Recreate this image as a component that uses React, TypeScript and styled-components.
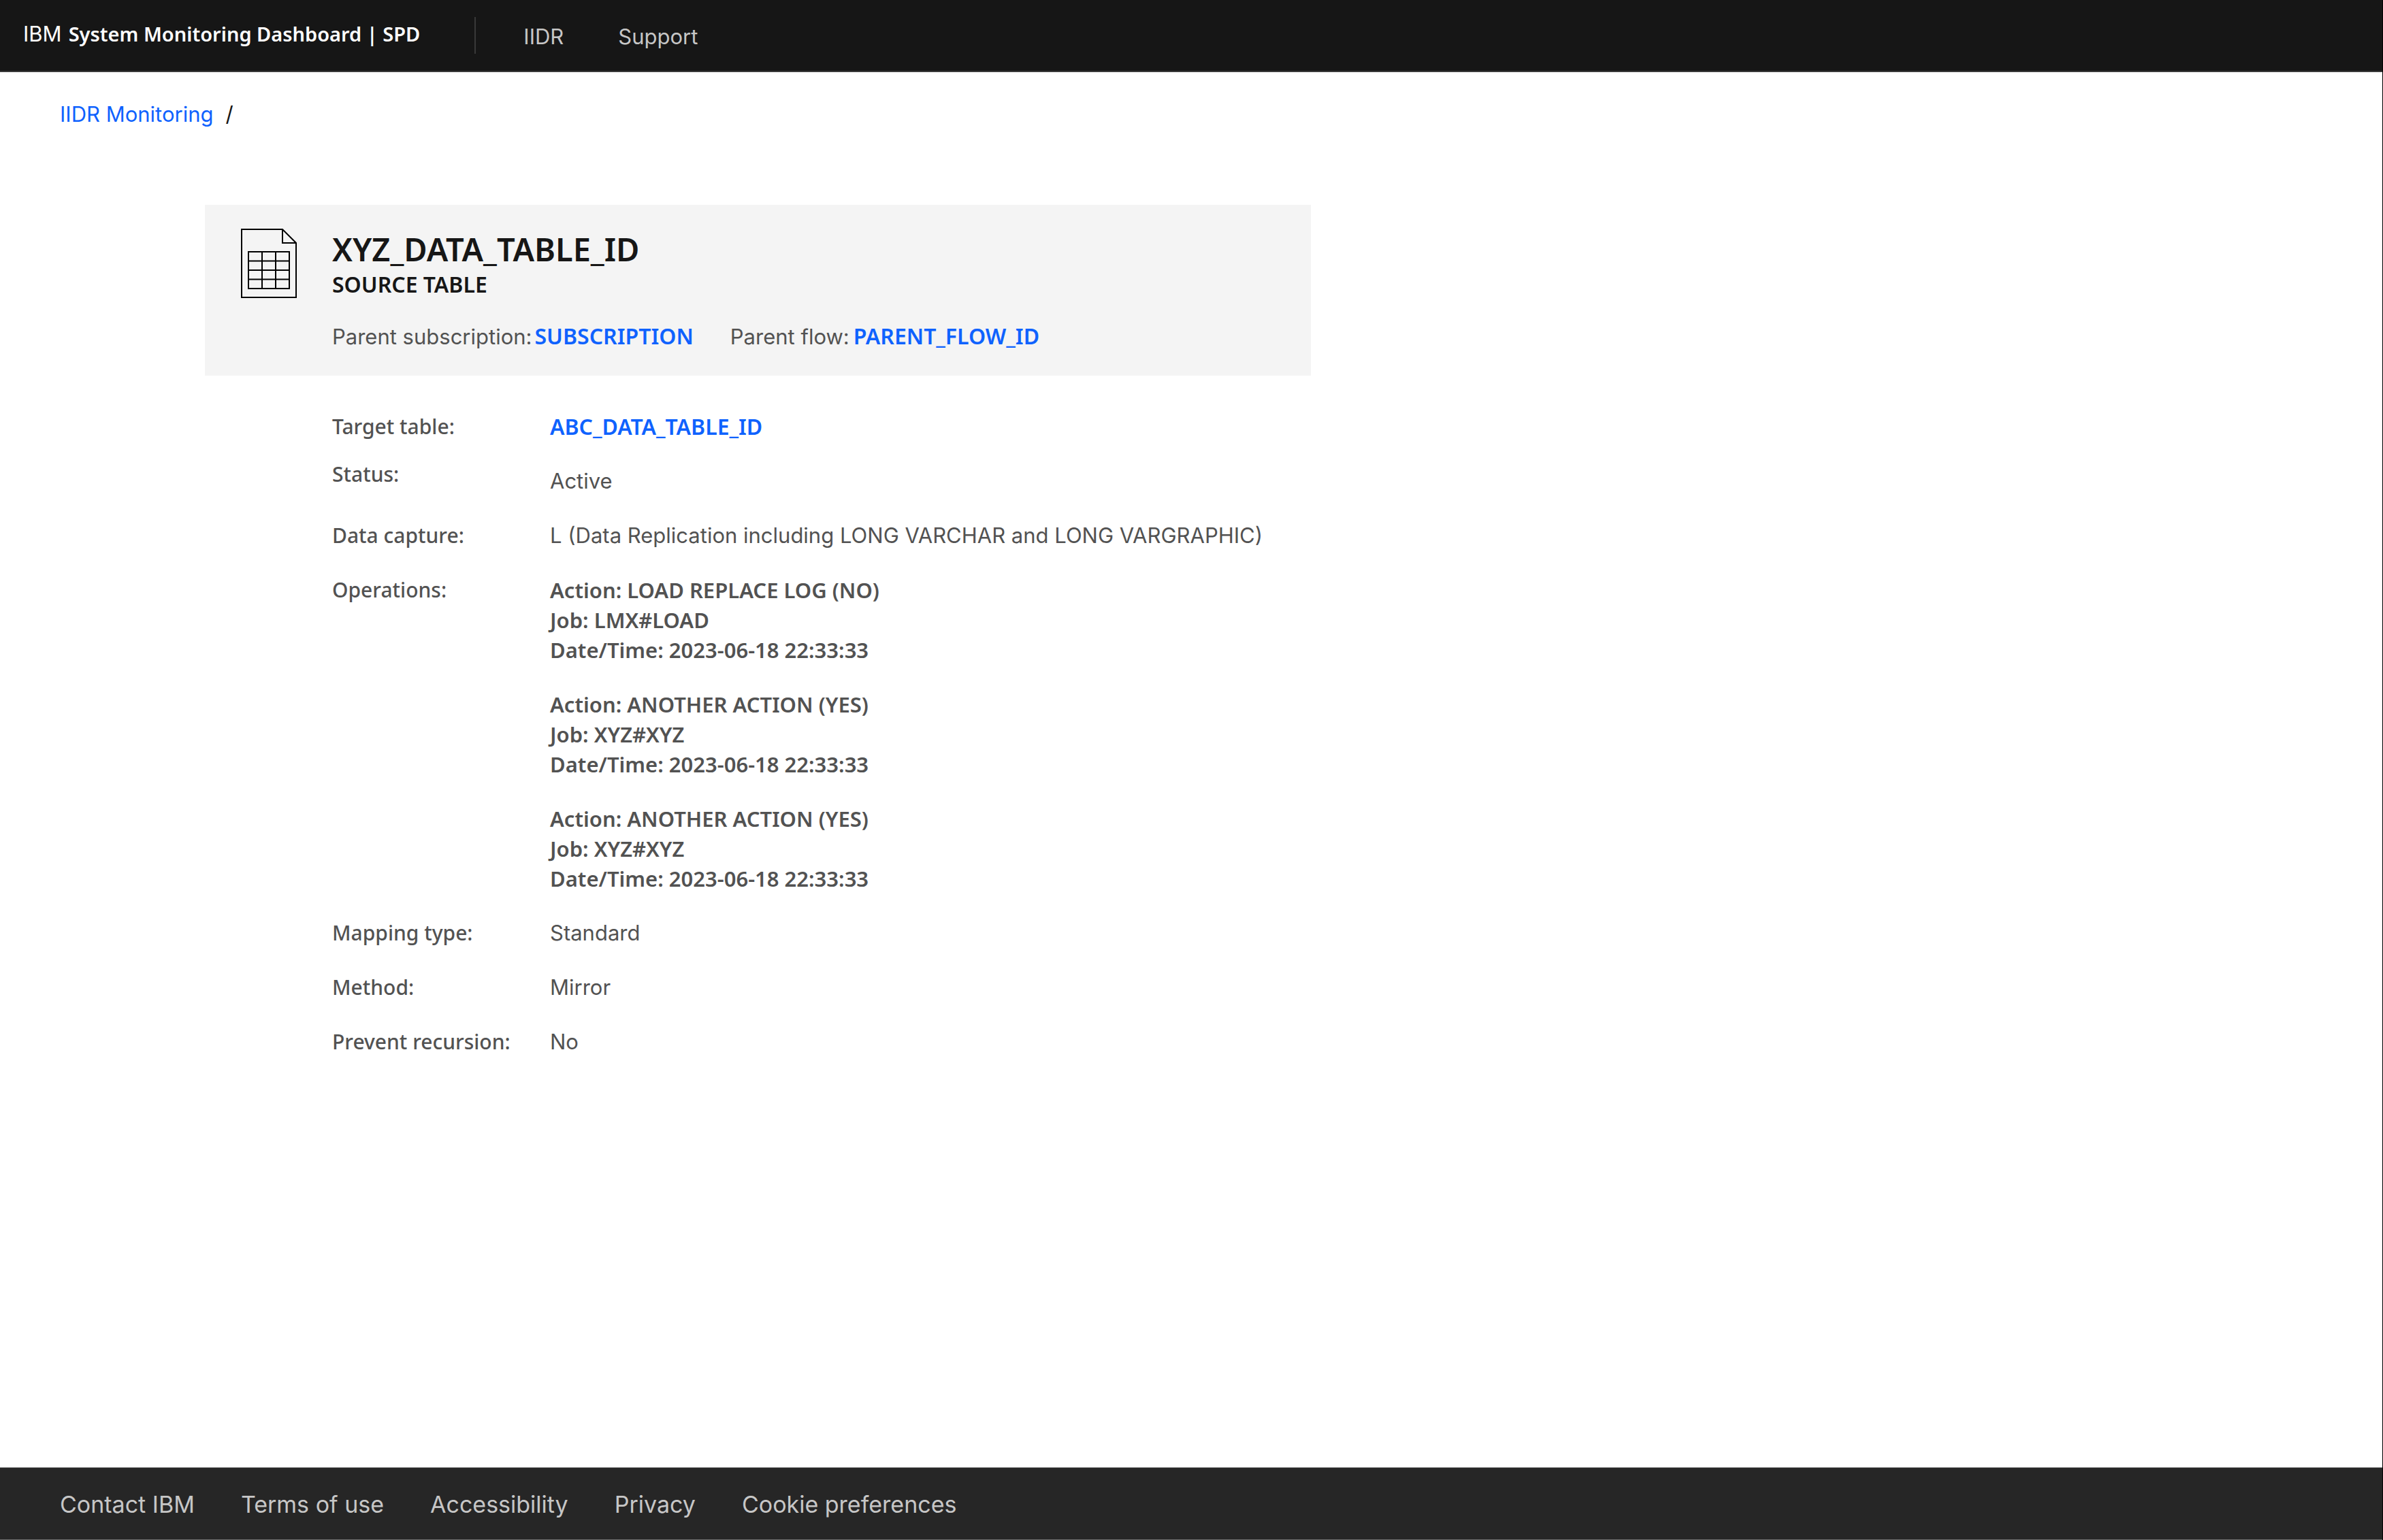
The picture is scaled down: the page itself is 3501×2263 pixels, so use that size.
import React from "react";
import styled, { createGlobalStyle } from "styled-components";

const sans = `Inter, "Liberation Sans", sans-serif`;
const strongSans = `"Noto Sans", "Open Sans", sans-serif`;

const color = {
  ink: "#161616",
  text: "#525252",
  link: "#0f62fe",
  muted: "#c6c6c6",
  line: "#393939",
  layer: "#f4f4f4",
  footer: "#262626",
};

const GlobalStyle = createGlobalStyle`
  * { box-sizing: border-box; }
  body { margin: 0; background: #ffffff; }
  h1, p, dl, dd, ul, ol { margin: 0; padding: 0; list-style: none; }
  a { text-decoration: none; }
`;

const Page = styled.div`
  display: flex;
  flex-direction: column;
  min-height: 100vh;
  border-right: 1px solid #000000;
  font-family: ${sans};
  font-size: 31px;
  line-height: 44px;
  color: ${color.text};
`;

const Header = styled.header`
  display: flex;
  align-items: center;
  height: 106px;
  padding-left: 34px;
  background: ${color.ink};
  border-bottom: 2px solid ${color.line};
  white-space: nowrap;
`;

const Brand = styled.a`
  display: flex;
  align-items: baseline;
  gap: 10px;
  padding: 0 80px 4px 0;
  color: #ffffff;
`;

const BrandName = styled.span`
  font-family: ${strongSans};
  font-size: 29px;
  font-weight: 600;
`;

const HeaderNav = styled.nav`
  display: flex;
  align-items: center;
  gap: 80px;
  height: 54px;
  padding-left: 70px;
  border-left: 2px solid ${color.line};
`;

const HeaderLink = styled.a`
  padding-top: 4px;
  color: ${color.muted};
`;

const Main = styled.main`
  flex: 1;
`;

const Breadcrumb = styled.nav`
  padding: 40px 88px 0;
`;

const Crumbs = styled.ol`
  display: flex;
  gap: 18px;
  color: ${color.ink};
`;

const CrumbLink = styled.a`
  color: ${color.link};
`;

const Content = styled.div`
  max-width: 1926px;
  padding: 111px 0 54px 301px;
`;

const Card = styled.section`
  display: grid;
  grid-template-columns: 134px 1fr;
  padding: 35px 53px;
  background: ${color.layer};
`;

const TableIcon = styled.svg`
  width: 82px;
  height: 102px;
  fill: none;
  stroke: #000000;
  stroke-width: 2;
`;

const Title = styled.h1`
  font-family: ${strongSans};
  font-size: 47px;
  font-weight: 600;
  line-height: 60px;
  color: ${color.ink};
`;

const Subtitle = styled.p`
  font-family: ${strongSans};
  font-size: 32px;
  font-weight: 600;
  color: ${color.ink};
`;

const Parents = styled.ul`
  display: flex;
  gap: 54px;
  padding-top: 32px;
`;

const Parent = styled.li<{ $gap: number }>`
  display: flex;
  align-items: baseline;
  gap: ${(p) => p.$gap}px;
`;

const StrongLink = styled.a`
  font-family: ${strongSans};
  font-size: 32px;
  font-weight: 600;
  color: ${color.link};
`;

const Details = styled.dl`
  display: flex;
  flex-direction: column;
  gap: 36px;
  padding: 53px 0 0 187px;
`;

const Row = styled.div`
  display: grid;
  grid-template-columns: 320px 1fr;
`;

const Label = styled.dt<{ $compact?: boolean }>`
  font-family: ${strongSans};
  font-size: 30px;
  font-weight: 500;
  line-height: ${(p) => (p.$compact ? 24 : 44)}px;
`;

const Value = styled.dd`
  display: flex;
  flex-direction: column;
  gap: 36px;
`;

const Operation = styled.p`
  font-family: ${strongSans};
  font-size: 31px;
  font-weight: 600;
  white-space: pre-line;
`;

const Footer = styled.footer`
  display: flex;
  align-items: center;
  gap: 68px;
  height: 107px;
  padding: 2px 88px 0;
  background: ${color.footer};
  border-top: 1px solid #8d8d8d;
  border-bottom: 1px solid #6f6f6f;
`;

const FooterLink = styled.a`
  font-size: 34px;
  color: ${color.muted};
`;

const operations = [
  { action: "LOAD REPLACE LOG (NO)", job: "LMX#LOAD", time: "2023-06-18 22:33:33" },
  { action: "ANOTHER ACTION (YES)", job: "XYZ#XYZ", time: "2023-06-18 22:33:33" },
  { action: "ANOTHER ACTION (YES)", job: "XYZ#XYZ", time: "2023-06-18 22:33:33" },
];

const details: { label: string; value: React.ReactNode; compact?: boolean }[] = [
  { label: "Target table:", value: <StrongLink href="#target">ABC_DATA_TABLE_ID</StrongLink> },
  { label: "Status:", value: "Active", compact: true },
  {
    label: "Data capture:",
    value: "L (Data Replication including LONG VARCHAR and LONG VARGRAPHIC)",
  },
  {
    label: "Operations:",
    value: operations.map((o, i) => (
      <Operation key={i}>{`Action: ${o.action}\nJob: ${o.job}\nDate/Time: ${o.time}`}</Operation>
    )),
  },
  { label: "Mapping type:", value: "Standard" },
  { label: "Method:", value: "Mirror" },
  { label: "Prevent recursion:", value: "No" },
];

const footerLinks = [
  "Contact IBM",
  "Terms of use",
  "Accessibility",
  "Privacy",
  "Cookie preferences",
];

export default function App() {
  return (
    <Page>
      <GlobalStyle />
      <Header>
        <Brand href="#home">
          <span>IBM</span>
          <BrandName>System Monitoring Dashboard | SPD</BrandName>
        </Brand>
        <HeaderNav aria-label="Main">
          <HeaderLink href="#iidr">IIDR</HeaderLink>
          <HeaderLink href="#support">Support</HeaderLink>
        </HeaderNav>
      </Header>
      <Main>
        <Breadcrumb aria-label="Breadcrumb">
          <Crumbs>
            <li>
              <CrumbLink href="#monitoring">IIDR Monitoring</CrumbLink>
            </li>
            <li aria-hidden="true">/</li>
          </Crumbs>
        </Breadcrumb>
        <Content>
          <Card>
            <TableIcon viewBox="0 0 82 102" aria-hidden="true">
              <path d="M1 1H61L81 21V101H1Z" />
              <path d="M61 1V21H81" />
              <path d="M11 34H71V88H11ZM31 34V88M51 34V88M11 47.5H71M11 61H71M11 74.5H71" />
            </TableIcon>
            <div>
              <Title>XYZ_DATA_TABLE_ID</Title>
              <Subtitle>SOURCE TABLE</Subtitle>
              <Parents>
                <Parent $gap={4}>
                  <span>Parent subscription:</span>
                  <StrongLink href="#subscription">SUBSCRIPTION</StrongLink>
                </Parent>
                <Parent $gap={6}>
                  <span>Parent flow:</span>
                  <StrongLink href="#flow">PARENT_FLOW_ID</StrongLink>
                </Parent>
              </Parents>
            </div>
          </Card>
          <Details>
            {details.map((d) => (
              <Row key={d.label}>
                <Label $compact={d.compact}>{d.label}</Label>
                <Value>{typeof d.value === "string" ? <span>{d.value}</span> : d.value}</Value>
              </Row>
            ))}
          </Details>
        </Content>
      </Main>
      <Footer>
        {footerLinks.map((name) => (
          <FooterLink key={name} href="#legal">
            {name}
          </FooterLink>
        ))}
      </Footer>
    </Page>
  );
}
